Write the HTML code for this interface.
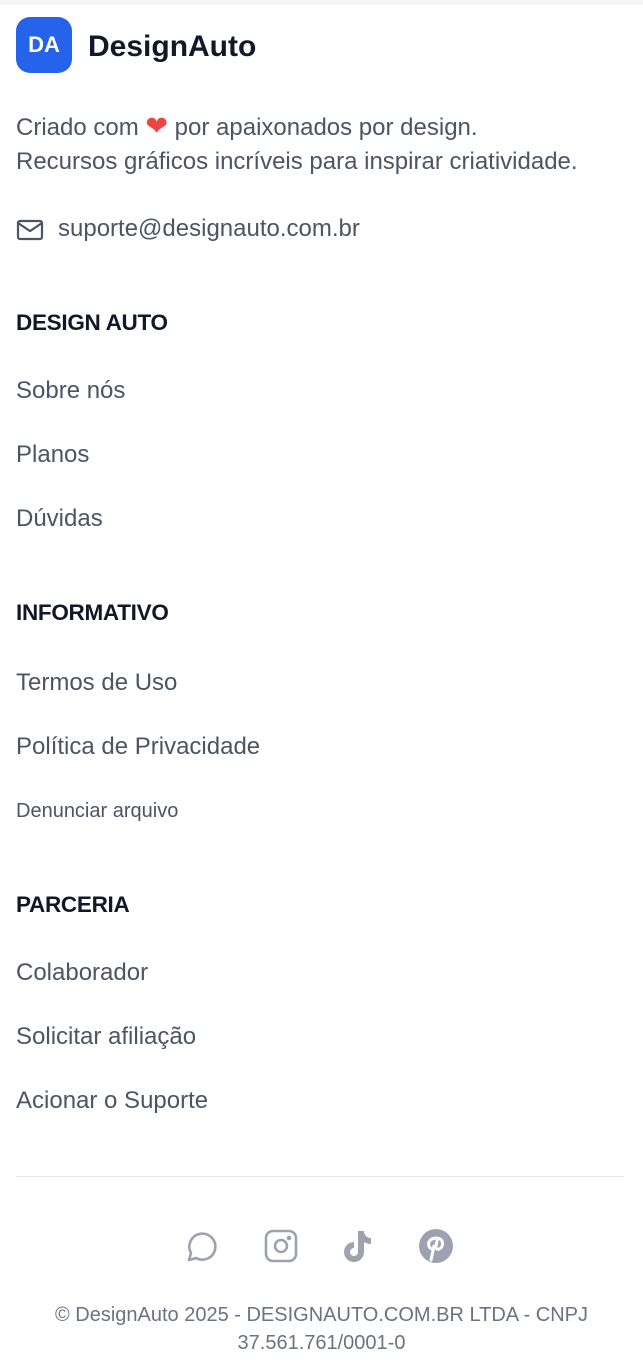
<!DOCTYPE html>
<html><head><meta charset="utf-8"><style>
body{margin:0;width:643px;height:1364px;background:#fff;font-family:"Liberation Sans",sans-serif;position:relative;overflow:hidden}
.t{position:absolute;left:16px;white-space:nowrap;line-height:1;color:#4b5563;font-size:24px}
.h{position:absolute;left:16px;font-size:22.5px;font-weight:bold;color:#111827;line-height:1;letter-spacing:-0.3px}
</style></head><body>
<div style="position:absolute;top:0;left:0;width:643px;height:5px;background:#f3f4f6"></div>
<div style="position:absolute;left:16px;top:17px;width:56px;height:56px;border-radius:14px;background:#2563eb;color:#fff;font-weight:bold;font-size:22px;line-height:56px;text-align:center">DA</div>
<div style="position:absolute;left:88px;top:32px;font-size:30px;font-weight:bold;color:#111827;line-height:1">DesignAuto</div>
<div class="t" style="top:113px">Criado com <span style="color:#ef4444;font-size:27px">❤</span> por apaixonados por design.</div>
<div class="t" style="top:150px">Recursos gráficos incríveis para inspirar criatividade.</div>
<svg style="position:absolute;left:16px;top:219px" width="28" height="22" viewBox="0 0 28 22" fill="none" stroke="#4b5563" stroke-width="2.2"><rect x="2" y="2" width="24" height="18" rx="2"/><path d="M2 4l12 8 12-8"/></svg>
<div class="t" style="top:217px;left:58px">suporte@designauto.com.br</div>
<div class="h" style="top:312px">DESIGN AUTO</div>
<div class="t" style="top:379px">Sobre nós</div>
<div class="t" style="top:443px">Planos</div>
<div class="t" style="top:507px">Dúvidas</div>
<div class="h" style="top:602px">INFORMATIVO</div>
<div class="t" style="top:671px">Termos de Uso</div>
<div class="t" style="top:735px">Política de Privacidade</div>
<div class="t" style="top:801px;font-size:20px">Denunciar arquivo</div>
<div class="h" style="top:894px">PARCERIA</div>
<div class="t" style="top:961px">Colaborador</div>
<div class="t" style="top:1025px">Solicitar afiliação</div>
<div class="t" style="top:1089px">Acionar o Suporte</div>
<div style="position:absolute;left:16px;top:1176px;width:608px;height:1px;background:#e5e7eb"></div>
<svg style="position:absolute;left:185px;top:1229px" width="34" height="34" viewBox="0 0 34 34" fill="none" stroke="#9ca3af" stroke-width="2.6" stroke-linejoin="round"><path d="M4 31l2-7A13 13 0 1 1 11 29z"/></svg>
<svg style="position:absolute;left:264px;top:1229px" width="34" height="34" viewBox="0 0 34 34" fill="none" stroke="#9ca3af" stroke-width="2.6"><rect x="2" y="2" width="30" height="30" rx="7"/><circle cx="17" cy="17" r="6"/><circle cx="25" cy="9" r="1" fill="#9ca3af"/></svg>
<svg style="position:absolute;left:341px;top:1229px" width="34" height="34" viewBox="0 0 34 34"><path fill="#9ca3af" d="M17 2h6c0 4 3 7 7 7v6c-3 0-5-1-7-2v10a10 10 0 1 1-10-10v6a4 4 0 1 0 4 4z"/></svg>
<svg style="position:absolute;left:419px;top:1229px" width="34" height="34" viewBox="0 0 34 34"><circle cx="17" cy="17" r="17" fill="#9ca3af"/><path fill="none" stroke="#fff" stroke-width="3" stroke-linecap="round" d="M13 20c-3-1-4-4-3-7 2-4 8-5 11-3 4 2 3 9-1 10-2 1-4-1-3-3l1-5M15 17l-3 14"/></svg>
<div style="position:absolute;left:0;width:643px;top:1301px;text-align:center;font-size:20px;color:#6b7280;line-height:28px">© DesignAuto 2025 - DESIGNAUTO.COM.BR LTDA - CNPJ<br>37.561.761/0001-0</div>
</body></html>
